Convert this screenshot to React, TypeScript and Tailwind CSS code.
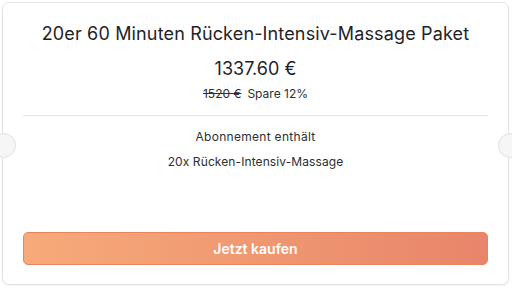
export default function App() {
  return (
    <div className="w-[512px] h-[288px] bg-white p-[2px] font-['Inter','Liberation_Sans',sans-serif]">
      <div className="relative h-[283px] w-[507px] rounded-[7px] border border-[#e4e4e4] bg-white flex flex-col items-center px-5 pb-[19px] shadow-[0_1px_2px_rgba(0,0,0,0.06)]">
        {/* ticket notches */}
        <div className="absolute left-[-12px] top-[130px] h-[25px] w-[25px] rounded-full border border-[#e2e2e2] bg-[#f6f6f6]" />
        <div className="absolute right-[-15px] top-[130px] h-[25px] w-[25px] rounded-full border border-[#e2e2e2] bg-[#f6f6f6]" />

        <h1 className="mt-[19px] text-[18px] leading-[24px] text-[#1f2328] tracking-[0.15px]">
          20er 60 Minuten Rücken-Intensiv-Massage Paket
        </h1>
        <div className="mt-[11px] text-[18px] leading-[24px] text-[#1f2328]">1337.60 €</div>
        <div className="mt-[5px] flex items-center gap-[6px] text-[12px] leading-[16px] text-[#2c2f33]">
          <span className="line-through">1520 €</span>
          <span>Spare 12%</span>
        </div>

        <div className="mt-[13px] w-full border-t border-[#e6e6e6]" />

        <div className="mt-[13px] text-[12px] leading-[16px] text-[#2c2f33] tracking-[0.3px]">Abonnement enthält</div>
        <div className="mt-[9px] text-[12px] leading-[16px] text-[#2c2f33] tracking-[0.1px]">20x Rücken-Intensiv-Massage</div>

        <button className="mt-auto h-[33px] w-full rounded-[5px] border border-[#e8845f] bg-gradient-to-r from-[#f7aa7a] to-[#e8856a] text-[14px] font-semibold text-white">
          Jetzt kaufen
        </button>
      </div>
    </div>
  );
}
